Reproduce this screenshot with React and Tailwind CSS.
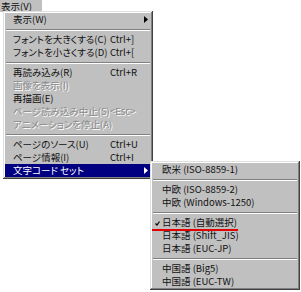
import React from "react";

const font = "font-['Noto_Sans_CJK_JP',sans-serif] [font-feature-settings:'palt']";
const bevel =
  "shadow-[inset_-1px_-1px_#404040,inset_1px_1px_#dfdfdf,inset_-2px_-2px_#808080,inset_2px_2px_#ffffff]";

const Arrow = ({ white }) => (
  <svg width="4" height="7" viewBox="0 0 4 7" className="absolute right-[3px] top-[3px]">
    <path d="M0 0 L4 3.5 L0 7 Z" fill={white ? "#fff" : "#000"} />
  </svg>
);

const Sep = () => (
  <div className="h-[7px] flex flex-col justify-center px-[1px]">
    <div className="h-px bg-[#808080]" />
    <div className="h-px bg-white" />
  </div>
);

const Item = ({ label, keys, disabled, active, sub }) => (
  <div
    className={`relative h-[13px] flex items-center pl-[8px] leading-[13px] ${
      active ? "bg-[#000080] text-white" : disabled ? "text-[#8a8a8a] [text-shadow:1px_1px_#fff]" : "text-[#111]"
    }`}
  >
    <span className="flex-1 whitespace-nowrap">{label}</span>
    {keys && <span className="w-[41px] whitespace-nowrap">{keys}</span>}
    {sub && <Arrow white={active} />}
  </div>
);

const SubItem = ({ label, checked }) => (
  <div className="relative h-[13px] flex items-center pl-[10px] leading-[13px] text-[#111] whitespace-nowrap">
    {checked && (
      <svg width="5" height="5" viewBox="0 0 5 5" className="absolute left-[3px] top-[5px]">
        <path d="M0.5 2.5 L2 4 L4.5 0.5" stroke="#000" strokeWidth="1.2" fill="none" />
      </svg>
    )}
    {label}
  </div>
);

export default function App() {
  return (
    <div className={`relative w-[301px] h-[292px] bg-white overflow-hidden text-[9.5px] ${font}`}>
      <div className="w-[42px] h-[12px] bg-[#c0c0c0] pl-[1px] leading-[12px] text-[#111] whitespace-nowrap">
        表示(<span className="underline">V</span>)
      </div>

      <div className={`absolute left-[3px] top-[11px] w-[150px] bg-[#c0c0c0] p-[2px] ${bevel}`}>
        <Item label="表示(W)" sub />
        <Sep />
        <Item label="フォントを大きくする(C)" keys="Ctrl+]" />
        <Item label="フォントを小さくする(D)" keys="Ctrl+[" />
        <Sep />
        <Item label="再読み込み(R)" keys="Ctrl+R" />
        <Item label="画像を表示(I)" disabled />
        <Item label="再描画(E)" />
        <Item label="ページ読み込み中止(S)" keys="<Esc>" disabled />
        <Item label="アニメーションを停止(A)" disabled />
        <Sep />
        <Item label="ページのソース(U)" keys="Ctrl+U" />
        <Item label="ページ情報(I)" keys="Ctrl+I" />
        <Item label="文字コード セット" active sub />
      </div>

      <div className={`absolute left-[150px] top-[161px] w-[150px] bg-[#c0c0c0] p-[2px] ${bevel}`}>
        <SubItem label="欧米 (ISO-8859-1)" />
        <Sep />
        <SubItem label="中欧 (ISO-8859-2)" />
        <SubItem label="中欧 (Windows-1250)" />
        <Sep />
        <SubItem label="日本語 (自動選択)" checked />
        <SubItem label="日本語 (Shift_JIS)" />
        <SubItem label="日本語 (EUC-JP)" />
        <Sep />
        <SubItem label="中国語 (Big5)" />
        <SubItem label="中国語 (EUC-TW)" />
      </div>

      <div className="absolute left-[152px] top-[229px] w-[86px] h-[2px] bg-[#e00000]" />
    </div>
  );
}
